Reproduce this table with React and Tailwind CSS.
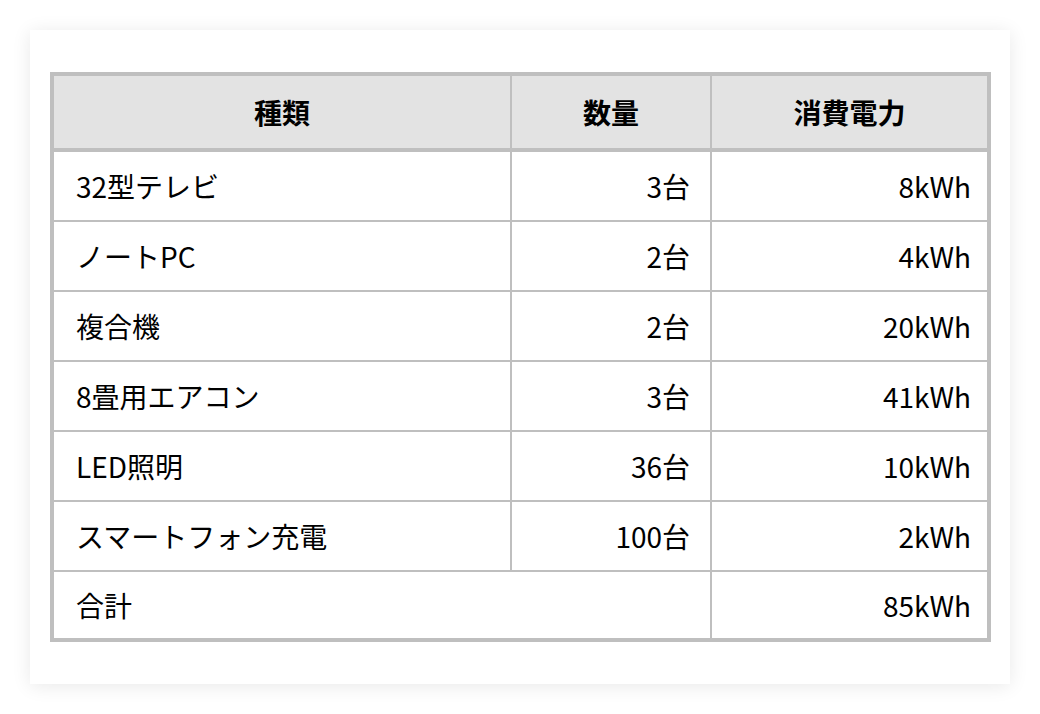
import React from "react";

const rows = [
  ["32型テレビ", "3台", "8kWh"],
  ["ノートPC", "2台", "4kWh"],
  ["複合機", "2台", "20kWh"],
  ["8畳用エアコン", "3台", "41kWh"],
  ["LED照明", "36台", "10kWh"],
  ["スマートフォン充電", "100台", "2kWh"],
];

export default function App() {
  return (
    <div
      className="w-[1040px] h-[714px] bg-white pt-[30px] px-[30px]"
      style={{ fontFamily: '"Noto Sans CJK JP", "Noto Sans", sans-serif' }}
    >
      <div className="w-[980px] bg-white px-5 py-[42px] shadow-[0_2px_18px_rgba(0,0,0,0.09)]">
        <table className="w-[937px] table-fixed border-collapse border-[4px] border-[#bfbfbf] text-[28px] text-black">
          <colgroup>
            <col className="w-[459px]" />
            <col className="w-[200px]" />
            <col className="w-[278px]" />
          </colgroup>
          <thead>
            <tr className="bg-[#e3e3e3]">
              <th className="border-[2px] border-b-[4px] border-[#bfbfbf] px-5 py-[15px] leading-[42px] font-bold text-center">種類</th>
              <th className="border-[2px] border-b-[4px] border-[#bfbfbf] px-5 py-[15px] leading-[42px] font-bold text-center">数量</th>
              <th className="border-[2px] border-b-[4px] border-[#bfbfbf] px-5 py-[15px] leading-[42px] font-bold text-center">消費電力</th>
            </tr>
          </thead>
          <tbody>
            {rows.map((r) => (
              <tr key={r[0]}>
                <td className="border-[2px] border-[#bfbfbf] px-[22px] py-[13px] leading-[42px] text-left">{r[0]}</td>
                <td className="border-[2px] border-[#bfbfbf] px-5 py-[13px] leading-[42px] text-right">{r[1]}</td>
                <td className="border-[2px] border-[#bfbfbf] pl-5 pr-[16px] py-[13px] leading-[42px] text-right">{r[2]}</td>
              </tr>
            ))}
            <tr>
              <td colSpan={2} className="border-[2px] border-[#bfbfbf] px-[22px] py-[12px] leading-[42px] text-left">合計</td>
              <td className="border-[2px] border-[#bfbfbf] pl-5 pr-[16px] py-[12px] leading-[42px] text-right">85kWh</td>
            </tr>
          </tbody>
        </table>
      </div>
    </div>
  );
}
